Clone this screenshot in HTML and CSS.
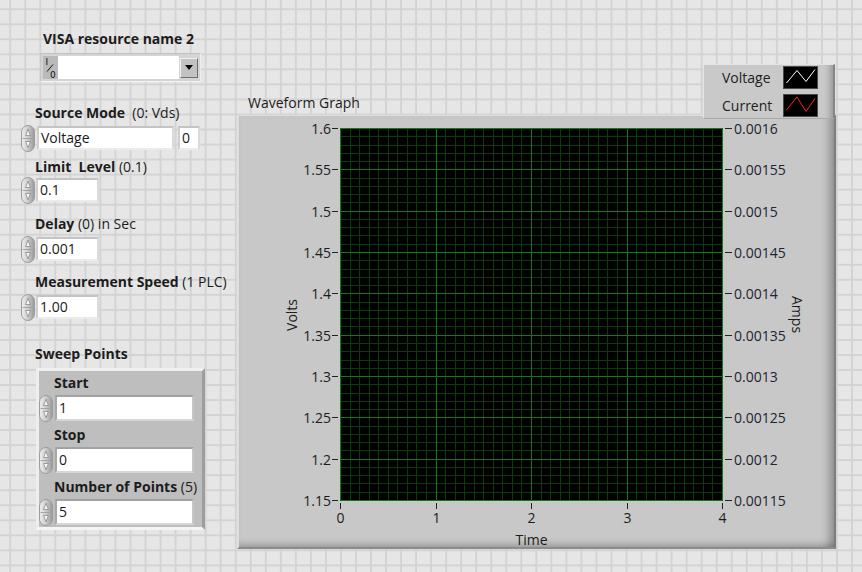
FILE: index.html
```html
<!DOCTYPE html>
<html lang="en">
<head>
<meta charset="utf-8">
<title>Front Panel</title>
<link rel="stylesheet" href="styles.css">
</head>
<body>
<svg class="defs" width="0" height="0" aria-hidden="true">
  <defs>
    <linearGradient id="spinGrad" x1="0" y1="0" x2="1" y2="0">
      <stop offset="0" stop-color="#efefef"/>
      <stop offset="0.45" stop-color="#d0d0d0"/>
      <stop offset="1" stop-color="#989898"/>
    </linearGradient>
    <symbol id="spin" viewBox="0 0 14 27">
      <rect x="0.5" y="0.5" width="13" height="26" rx="6.5" fill="url(#spinGrad)" stroke="#9c9c9c"/>
      <line x1="1.5" y1="13.5" x2="12.5" y2="13.5" stroke="#a4a4a4"/>
      <path d="M4.6 10.5 L7 4.2 L9.4 10.5 Z" fill="#f7f7f7" stroke="#8a8a8a" stroke-width="0.8"/>
      <path d="M4.6 16.5 L7 22.8 L9.4 16.5 Z" fill="#f7f7f7" stroke="#8a8a8a" stroke-width="0.8"/>
    </symbol>
  </defs>
</svg>

<main class="panel">
  <section class="left">
    <div class="visa">
      <div class="lbl"><b>VISA resource name 2</b></div>
      <div class="visa-ctl">
        <svg class="io" width="15" height="23" viewBox="0 0 15 23">
          <text x="2.5" y="9" class="io-t">I</text>
          <line x1="4" y1="15.5" x2="10" y2="8.5" stroke="#111" stroke-width="1"/>
          <text x="7" y="21.5" class="io-t">0</text>
        </svg>
        <div class="visa-field"></div>
        <div class="dd"></div>
      </div>
    </div>

    <div class="grp g-source">
      <div class="lbl"><b>Source Mode</b>&nbsp; (0: Vds)</div>
      <div class="row">
        <svg class="spin" width="14" height="27"><use href="#spin" width="14" height="27"/></svg>
        <div class="field f-string">Voltage</div>
        <div class="field f-num">0</div>
      </div>
    </div>

    <div class="grp g-limit">
      <div class="lbl"><b>Limit&nbsp; Level</b> (0.1)</div>
      <div class="row">
        <svg class="spin" width="14" height="27"><use href="#spin" width="14" height="27"/></svg>
        <div class="field f-small">0.1</div>
      </div>
    </div>

    <div class="grp g-delay">
      <div class="lbl"><b>Delay</b> (0) in Sec</div>
      <div class="row">
        <svg class="spin" width="14" height="27"><use href="#spin" width="14" height="27"/></svg>
        <div class="field f-small">0.001</div>
      </div>
    </div>

    <div class="grp g-meas">
      <div class="lbl"><b>Measurement Speed</b> (1 PLC)</div>
      <div class="row">
        <svg class="spin" width="14" height="27"><use href="#spin" width="14" height="27"/></svg>
        <div class="field f-small">1.00</div>
      </div>
    </div>

    <div class="grp g-sweep">
      <div class="lbl"><b>Sweep Points</b></div>
      <div class="cluster">
        <div class="citem">
          <div class="lbl"><b>Start</b></div>
          <div class="crow">
            <svg class="spin" width="14" height="27"><use href="#spin" width="14" height="27"/></svg>
            <div class="field cfield">1</div>
          </div>
        </div>
        <div class="citem">
          <div class="lbl"><b>Stop</b></div>
          <div class="crow">
            <svg class="spin" width="14" height="27"><use href="#spin" width="14" height="27"/></svg>
            <div class="field cfield">0</div>
          </div>
        </div>
        <div class="citem">
          <div class="lbl"><b>Number of Points</b> (5)</div>
          <div class="crow">
            <svg class="spin" width="14" height="27"><use href="#spin" width="14" height="27"/></svg>
            <div class="field cfield">5</div>
          </div>
        </div>
      </div>
    </div>
  </section>

  <section class="graph">
    <div class="legend">
      <div class="lrow">
        <span>Voltage</span>
        <svg class="swatch" width="35" height="23" viewBox="0 0 35 23">
          <rect x="0.5" y="0.5" width="34" height="22" fill="#000" stroke="#4a4a4a"/>
          <polyline points="3.5,17 14,4.5 23,15.5 32,3.5" fill="none" stroke="#ffffff" stroke-width="1"/>
        </svg>
      </div>
      <div class="lrow">
        <span>Current</span>
        <svg class="swatch" width="35" height="23" viewBox="0 0 35 23">
          <rect x="0.5" y="0.5" width="34" height="22" fill="#000" stroke="#4a4a4a"/>
          <polyline points="3.5,16 14,3 23,17.5 32,4.5" fill="none" stroke="#ff2020" stroke-width="1"/>
        </svg>
      </div>
    </div>

    <div class="gtitle">Waveform Graph</div>
    <div class="gframe">
      <div class="yaxis">
        <div class="volts"><span>Volts</span></div>
        <div class="yticks">
          <div class="yt" style="top:0.5px"><span>1.6</span><i></i></div>
          <div class="yt" style="top:41.5px"><span>1.55</span><i></i></div>
          <div class="yt" style="top:83.5px"><span>1.5</span><i></i></div>
          <div class="yt" style="top:124.5px"><span>1.45</span><i></i></div>
          <div class="yt" style="top:165.5px"><span>1.4</span><i></i></div>
          <div class="yt" style="top:207.5px"><span>1.35</span><i></i></div>
          <div class="yt" style="top:248.5px"><span>1.3</span><i></i></div>
          <div class="yt" style="top:289.5px"><span>1.25</span><i></i></div>
          <div class="yt" style="top:331.5px"><span>1.2</span><i></i></div>
          <div class="yt" style="top:372.5px"><span>1.15</span><i></i></div>
        </div>
      </div>

      <div class="plot">
        <svg width="383" height="373" viewBox="0 0 383 373" shape-rendering="crispEdges">
          <rect width="383" height="373" fill="#000"/>
          <path class="minor" d="M10.5 0V373M19.5 0V373M29.5 0V373M38.5 0V373M48.5 0V373M57.5 0V373M67.5 0V373M76.5 0V373M86.5 0V373M105.5 0V373M115.5 0V373M124.5 0V373M134.5 0V373M143.5 0V373M153.5 0V373M162.5 0V373M172.5 0V373M181.5 0V373M201.5 0V373M210.5 0V373M220.5 0V373M229.5 0V373M239.5 0V373M248.5 0V373M258.5 0V373M267.5 0V373M277.5 0V373M296.5 0V373M306.5 0V373M315.5 0V373M325.5 0V373M334.5 0V373M344.5 0V373M353.5 0V373M363.5 0V373M372.5 0V373"/>
          <path class="minor" d="M0 8.5H383M0 17.5H383M0 25.5H383M0 33.5H383M0 50.5H383M0 58.5H383M0 66.5H383M0 74.5H383M0 91.5H383M0 99.5H383M0 107.5H383M0 116.5H383M0 132.5H383M0 141.5H383M0 149.5H383M0 157.5H383M0 174.5H383M0 182.5H383M0 190.5H383M0 198.5H383M0 215.5H383M0 223.5H383M0 232.5H383M0 240.5H383M0 256.5H383M0 265.5H383M0 273.5H383M0 281.5H383M0 298.5H383M0 306.5H383M0 314.5H383M0 322.5H383M0 339.5H383M0 347.5H383M0 355.5H383M0 364.5H383"/>
          <path class="major" d="M0.5 0V373M96.5 0V373M191.5 0V373M287.5 0V373M382.5 0V373M0 0.5H383M0 41.5H383M0 83.5H383M0 124.5H383M0 165.5H383M0 207.5H383M0 248.5H383M0 289.5H383M0 331.5H383M0 372.5H383"/>
        </svg>
      </div>

      <div class="raxis">
        <div class="rticks">
          <div class="rt" style="top:0.5px"><i></i><span>0.0016</span></div>
          <div class="rt" style="top:41.5px"><i></i><span>0.00155</span></div>
          <div class="rt" style="top:83.5px"><i></i><span>0.0015</span></div>
          <div class="rt" style="top:124.5px"><i></i><span>0.00145</span></div>
          <div class="rt" style="top:165.5px"><i></i><span>0.0014</span></div>
          <div class="rt" style="top:207.5px"><i></i><span>0.00135</span></div>
          <div class="rt" style="top:248.5px"><i></i><span>0.0013</span></div>
          <div class="rt" style="top:289.5px"><i></i><span>0.00125</span></div>
          <div class="rt" style="top:331.5px"><i></i><span>0.0012</span></div>
          <div class="rt" style="top:372.5px"><i></i><span>0.00115</span></div>
        </div>
        <div class="amps"><span>Amps</span></div>
      </div>

      <div class="xaxis">
        <div class="xticks">
          <div class="xt" style="left:0.5px"><i></i><span>0</span></div>
          <div class="xt" style="left:96.5px"><i></i><span>1</span></div>
          <div class="xt" style="left:191.5px"><i></i><span>2</span></div>
          <div class="xt" style="left:287.5px"><i></i><span>3</span></div>
          <div class="xt" style="left:382.5px"><i></i><span>4</span></div>
        </div>
        <div class="xtitle">Time</div>
      </div>
    </div>
  </section>
</main>
</body>
</html>
```

FILE: styles.css
```css
* { box-sizing: border-box; }

html, body { margin: 0; padding: 0; }

body {
  width: 862px;
  height: 572px;
  overflow: hidden;
  font-family: "Open Sans", "Noto Sans", "DejaVu Sans", sans-serif;
  font-size: 14px;
  color: #1c1c1c;
  background-color: #e6e6e6;
  background-image:
    linear-gradient(to right, #d3d3d3 2px, transparent 2px),
    linear-gradient(to bottom, #d3d3d3 2px, transparent 2px);
  background-size: 15.04px 15.04px;
  background-position: 9.3px 8.3px;
}

.defs { position: absolute; width: 0; height: 0; overflow: hidden; }

.panel { display: flex; align-items: flex-start; }

/* ---------- left column ---------- */
.left { width: 237px; flex: none; }

.lbl {
  height: 18px;
  line-height: 18px;
  white-space: nowrap;
  font-weight: 400;
}
.lbl b { font-weight: 700; }

.visa { margin: 30px 0 0 40px; }
.visa .lbl { margin-left: 3px; }

.visa-ctl {
  margin-top: 5px;
  width: 161px;
  height: 29px;
  display: flex;
  align-items: center;
  padding: 0 2px;
  background: #d4d4d4;
  border: 1px solid;
  border-color: #c2c2c2 #ececec #f2f2f2 #c6c6c6;
}
.io { flex: none; background: #bababa; }
.io-t { font-family: "DejaVu Sans", sans-serif; font-size: 9px; fill: #111; }
.visa-field { width: 123px; height: 23px; background: #fff; }
.dd {
  width: 18px;
  height: 20px;
  margin-left: 1px;
  background: #c2c2c2;
  border: 1px solid;
  border-color: #f0f0f0 #6f6f6f #6f6f6f #f0f0f0;
  display: flex;
  align-items: center;
  justify-content: center;
}
.dd::after {
  content: "";
  border-left: 4px solid transparent;
  border-right: 4px solid transparent;
  border-top: 5px solid #000;
}

.grp { margin-left: 21px; }
.grp > .lbl { margin-left: 14px; }

.g-source { margin-top: 22px; }
.g-source .row { margin-top: 3px; }
.g-limit { margin-top: 7px; }
.g-limit .row { margin-top: 1px; }
.g-delay { margin-top: 12px; }
.g-delay .row { margin-top: 3px; }
.g-meas { margin-top: 11px; }
.g-meas .row { margin-top: 3px; }
.g-sweep { margin-top: 25px; }

.row { display: flex; align-items: center; height: 26px; }
.spin { flex: none; display: block; }

.field {
  height: 24px;
  background: #fff;
  border: 2px solid;
  border-color: #c4c4c4 #dadada #ebebeb #cfcfcf;
  padding: 0 2px;
  line-height: 20px;
  white-space: nowrap;
  color: #1a1a1a;
}
.f-string { width: 137px; margin-left: 2px; }
.f-num { width: 22px; margin-left: 4px; }
.f-small { width: 63px; margin-left: 1px; }

/* cluster */
.cluster {
  margin-top: 5px;
  margin-left: 15px;
  width: 169px;
  background: #bebebe;
  border: 3px solid;
  border-color: #f0f0f0 #9e9e9e #f4f4f4 #eeeeee;
  padding: 3px 0 2px 0;
}
.citem + .citem { margin-top: 5px; }
.citem .lbl { margin-left: 15px; }
.crow { display: flex; align-items: center; height: 26px; margin-top: 3px; }
.cfield {
  width: 139px;
  height: 26px;
  margin-left: 2px;
  line-height: 22px;
  border-color: #a2a2a2 #c6c6c6 #d6d6d6 #a8a8a8;
}

/* ---------- graph ---------- */
.graph {
  position: relative;
  flex: none;
  width: 599px;
  margin-top: 94px;
}
.gtitle {
  margin-left: 11px;
  height: 18px;
  line-height: 18px;
}

.legend {
  position: absolute;
  left: 466px;
  top: -30px;
  z-index: 2;
  width: 132px;
  height: 55px;
  background: #c9c9c9;
  border-style: solid;
  border-width: 1px 2px 1px 1px;
  border-color: #e4e4e4 #858585 #a9a9a9 #e4e4e4;
  box-shadow: inset -8px 0 6px -5px rgba(0, 0, 0, 0.25);
  padding: 1px 15px 0 18px;
  display: flex;
  flex-direction: column;
  gap: 5px;
}
.lrow {
  display: flex;
  align-items: center;
  justify-content: space-between;
  height: 23px;
  color: #1e1e1e;
}
.swatch { display: block; }

.gframe {
  margin-top: 3px;
  width: 599px;
  height: 434px;
  display: grid;
  grid-template-columns: 101px 383px 111px;
  grid-template-rows: 12px 373px 46px;
  background: #c8c8c8;
  border-style: solid;
  border-width: 1px 2px 2px 2px;
  border-color: #e0e0e0 #7d7d7d #8c8c8c #dedede;
  box-shadow:
    inset -11px 0 9px -6px rgba(0, 0, 0, 0.28),
    inset 0 -7px 6px -4px rgba(0, 0, 0, 0.22);
}

.yaxis { grid-column: 1; grid-row: 2; display: flex; }
.volts {
  width: 62px;
  flex: none;
  display: flex;
  align-items: center;
  justify-content: flex-end;
}
.volts span { writing-mode: vertical-rl; transform: rotate(180deg); line-height: 19px; }
.yticks { position: relative; flex: 1; }
.yt {
  position: absolute;
  right: 2px;
  display: flex;
  align-items: center;
  gap: 1px;
  transform: translateY(-50%);
  line-height: 18px;
  white-space: nowrap;
}
.yt i, .rt i { display: block; width: 6px; height: 1px; background: #222; }

.plot { grid-column: 2; grid-row: 2; }
.plot svg { display: block; }
.minor { stroke: #0a3c0a; stroke-width: 1; fill: none; }
.major { stroke: #0f7a0f; stroke-width: 1; fill: none; }

.raxis { grid-column: 3; grid-row: 2; display: flex; }
.rticks { position: relative; width: 65px; flex: none; }
.rt {
  position: absolute;
  left: 2px;
  display: flex;
  align-items: center;
  gap: 2px;
  transform: translateY(-50%);
  line-height: 18px;
  white-space: nowrap;
  color: #1e2433;
}
.rt i { width: 7px; }
.amps {
  width: 18px;
  flex: none;
  display: flex;
  align-items: center;
  justify-content: center;
}
.amps span { writing-mode: vertical-rl; line-height: 18px; }

.xaxis { grid-column: 2; grid-row: 3; display: flex; flex-direction: column; }
.xticks { position: relative; height: 30px; flex: none; }
.xt {
  position: absolute;
  top: 0;
  display: flex;
  flex-direction: column;
  align-items: center;
  transform: translateX(-50%);
}
.xt i { display: block; width: 1px; height: 6px; margin-top: 2px; background: #222; }
.xt span { line-height: 18px; }
.xtitle { text-align: center; line-height: 18px; white-space: nowrap; }
```
